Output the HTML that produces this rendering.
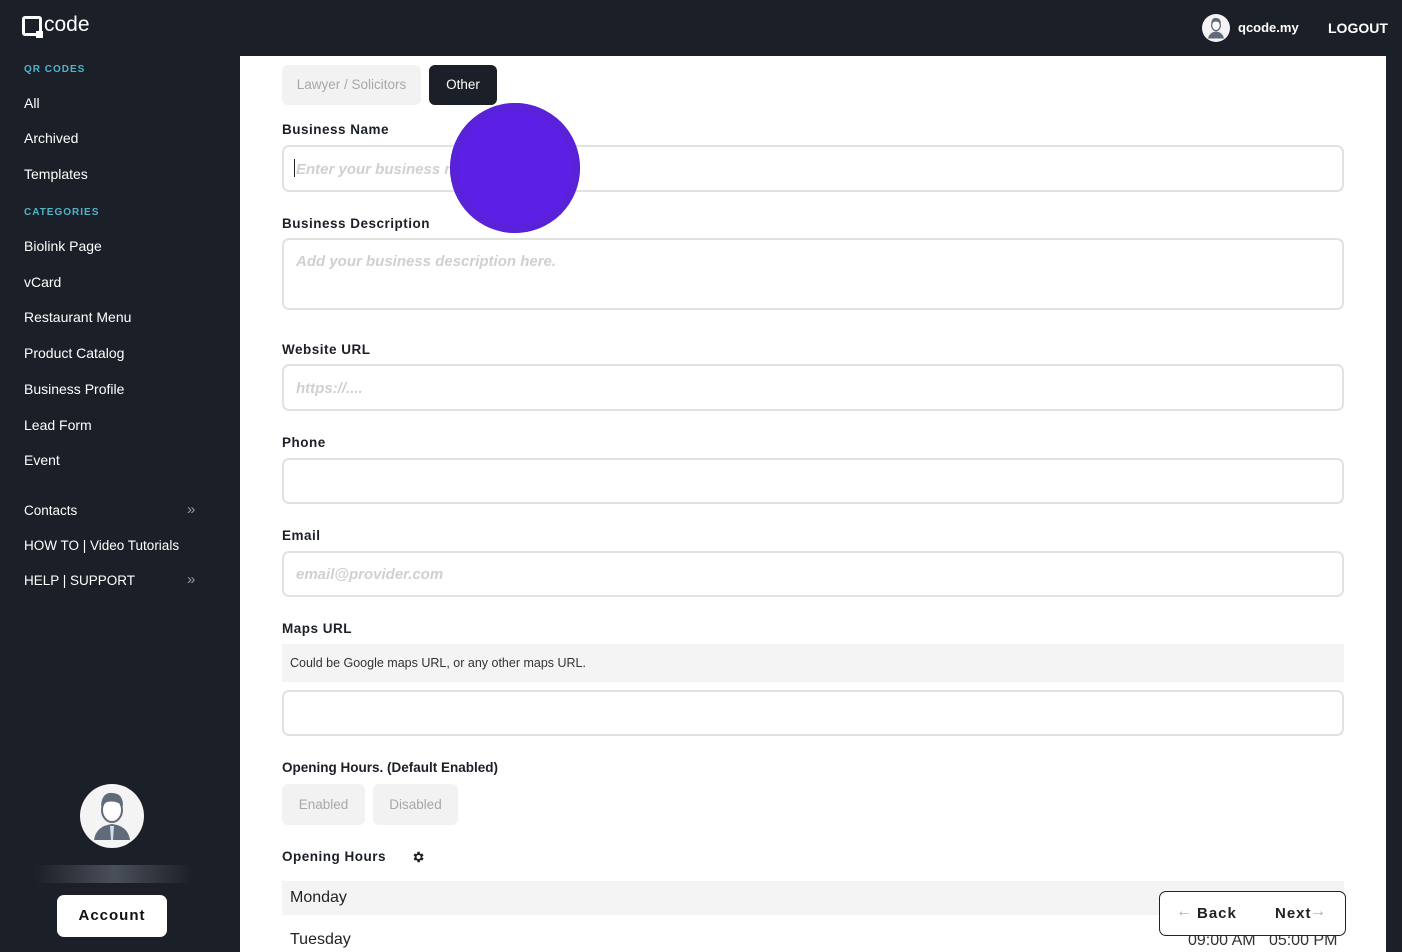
<!DOCTYPE html>
<html><head><meta charset="utf-8"><style>
*{box-sizing:border-box;margin:0;padding:0}
html,body{width:1402px;height:952px;overflow:hidden}
body{background:#1b1f27;font-family:"Liberation Sans",sans-serif;position:relative}
.a{position:absolute}
.nav{color:#fff;font-size:14px;left:24px}
.cat{color:#4fb3c9;font-size:10px;font-weight:bold;letter-spacing:1px;left:24px}
.main{left:240px;top:56px;width:1146px;height:896px;background:#fff}
.lbl{font-size:13.5px;font-weight:bold;color:#1b1f27;letter-spacing:.5px;left:42px}
.in{left:42px;width:1062px;border:2px solid #e2e2e2;border-radius:7px;background:#fff;color:#d0d0d0;font-style:italic;font-weight:bold;font-size:15px;padding-left:12px}
.btn{background:#f2f2f3;color:#a8a8a8;font-size:13.5px;border-radius:6px;text-align:center}
.day{left:42px;width:1062px;height:34px;font-size:16px;color:#222;padding-left:8px;line-height:34px}
</style></head><body>
<div class="a" style="left:22px;top:16px;width:20px;height:20px;border:3px solid #fff;border-radius:3px"></div>
<div class="a" style="left:36px;top:31px;width:7px;height:7px;background:#fff"></div>
<div class="a" style="left:44px;top:13px;color:#fff;font-size:21px">code</div>
<div class="a cat" style="top:64px">QR CODES</div>
<div class="a nav" style="top:95px">All</div>
<div class="a nav" style="top:130px">Archived</div>
<div class="a nav" style="top:166px">Templates</div>
<div class="a cat" style="top:207px">CATEGORIES</div>
<div class="a nav" style="top:238px">Biolink Page</div>
<div class="a nav" style="top:274px">vCard</div>
<div class="a nav" style="top:309px">Restaurant Menu</div>
<div class="a nav" style="top:345px">Product Catalog</div>
<div class="a nav" style="top:381px">Business Profile</div>
<div class="a nav" style="top:417px">Lead Form</div>
<div class="a nav" style="top:452px">Event</div>
<div class="a nav" style="top:503px;font-size:13.5px">Contacts</div>
<div class="a" style="left:187px;top:501px;color:#999;font-size:15px">»</div>
<div class="a nav" style="top:538px;font-size:13.5px">HOW TO | Video Tutorials</div>
<div class="a nav" style="top:573px;font-size:13.5px">HELP | SUPPORT</div>
<div class="a" style="left:187px;top:571px;color:#999;font-size:15px">»</div>
<svg class="a" style="left:80px;top:784px" width="64" height="64" viewBox="0 0 64 64"><circle cx="32" cy="32" r="32" fill="#f4f4f4"/><path d="M14 56 Q16 42 32 40 Q48 42 50 56 Z" fill="#5f6b78"/><path d="M30 42 L34 42 L33 56 L31 56Z" fill="#cfe0ea"/><ellipse cx="32" cy="26" rx="10" ry="12" fill="#fff" stroke="#5f6b78" stroke-width="2"/><path d="M21 22 Q22 8 32 9 Q43 9 43 22 Q36 16 27 18Z" fill="#5f6b78"/></svg>
<div class="a" style="left:35px;top:865px;width:158px;height:18px;background:linear-gradient(90deg,#1b1f27,#4a4f5a 50%,#1b1f27)"></div>
<div class="a" style="left:57px;top:895px;width:110px;height:42px;background:#fff;border-radius:7px;text-align:center;line-height:42px;font-weight:bold;font-size:15px;letter-spacing:1px;color:#111">Account</div>
<svg class="a" style="left:1202px;top:14px" width="28" height="28" viewBox="0 0 64 64"><circle cx="32" cy="32" r="32" fill="#f4f4f4"/><path d="M14 56 Q16 42 32 40 Q48 42 50 56 Z" fill="#5f6b78"/><ellipse cx="32" cy="26" rx="10" ry="12" fill="#fff" stroke="#5f6b78" stroke-width="3"/><path d="M21 22 Q22 8 32 9 Q43 9 43 22 Q36 16 27 18Z" fill="#5f6b78"/></svg>
<div class="a" style="left:1238px;top:20px;color:#fff;font-weight:bold;font-size:13px">qcode.my</div>
<div class="a" style="left:1328px;top:20px;color:#fff;font-weight:bold;font-size:14px">LOGOUT</div>
<div class="a main">
<div class="a btn" style="left:42px;top:9px;width:139px;height:40px;line-height:40px">Lawyer / Solicitors</div>
<div class="a btn" style="left:189px;top:9px;width:68px;height:40px;line-height:40px;background:#1b1f27;color:#fff">Other</div>
<div class="a lbl" style="top:66px">Business Name</div>
<div class="a in" style="top:89px;height:47px;line-height:45px">Enter your business name</div>
<div class="a" style="left:54px;top:103px;width:1px;height:18px;background:#222"></div>
<div class="a lbl" style="top:160px">Business Description</div>
<div class="a in" style="top:182px;height:72px;line-height:44px">Add your business description here.</div>
<div class="a lbl" style="top:286px">Website URL</div>
<div class="a in" style="top:308px;height:47px;line-height:45px">https://....</div>
<div class="a lbl" style="top:379px">Phone</div>
<div class="a in" style="top:402px;height:46px"></div>
<div class="a lbl" style="top:472px">Email</div>
<div class="a in" style="top:495px;height:46px;line-height:44px">email@provider.com</div>
<div class="a lbl" style="top:565px">Maps URL</div>
<div class="a" style="left:42px;top:588px;width:1062px;height:38px;background:#f4f4f4;font-size:12.5px;color:#333;padding-left:8px;line-height:38px">Could be Google maps URL, or any other maps URL.</div>
<div class="a in" style="top:634px;height:46px"></div>
<div class="a lbl" style="top:704px;letter-spacing:0">Opening Hours. (Default Enabled)</div>
<div class="a btn" style="left:42px;top:728px;width:83px;height:41px;line-height:41px">Enabled</div>
<div class="a btn" style="left:133px;top:728px;width:85px;height:41px;line-height:41px">Disabled</div>
<div class="a lbl" style="top:793px">Opening Hours</div>
<svg class="a" style="left:171px;top:794px" width="14" height="14" viewBox="0 0 24 24"><path fill="#222" d="M19.4 13a7.5 7.5 0 000-2l2.1-1.6-2-3.5-2.5 1a7.4 7.4 0 00-1.7-1L15 3h-4l-.4 2.9a7.4 7.4 0 00-1.7 1l-2.5-1-2 3.5L6.5 11a7.5 7.5 0 000 2l-2.1 1.6 2 3.5 2.5-1a7.4 7.4 0 001.7 1L11 21h4l.4-2.9a7.4 7.4 0 001.7-1l2.5 1 2-3.5zM13 15.5a3.5 3.5 0 110-7 3.5 3.5 0 010 7z"/></svg>
<div class="a day" style="top:825px;background:#f4f4f4">Monday</div>
<div class="a day" style="top:867px">Tuesday</div>
<div class="a" style="left:948px;top:876px;font-size:16px;color:#333">09:00 AM &nbsp;&nbsp;05:00 PM</div>
</div>
<div class="a" style="left:450px;top:103px;width:130px;height:130px;border-radius:50%;background:#5b1fe6;box-shadow:inset 0 0 0 8px #5a22d8"></div>
<div class="a" style="left:1159px;top:891px;width:187px;height:45px;background:#fff;border:1px solid #222;border-radius:7px"></div>
<div class="a" style="left:1176px;top:903px;color:#aaa;font-size:16px">←</div>
<div class="a" style="left:1197px;top:905px;font-weight:bold;font-size:15px;letter-spacing:1px;color:#222">Back</div>
<div class="a" style="left:1275px;top:905px;font-weight:bold;font-size:15px;letter-spacing:1px;color:#222">Next</div>
<div class="a" style="left:1310px;top:903px;color:#aaa;font-size:16px">→</div>
</body></html>
